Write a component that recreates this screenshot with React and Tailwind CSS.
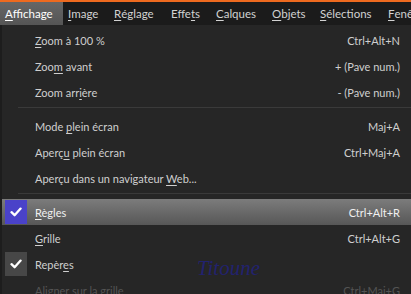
import React from "react";

const U = ({ children }) => <span className="underline underline-offset-2 decoration-1">{children}</span>;

const Check = () => (
  <svg width="12" height="10" viewBox="0 0 12 10" fill="none">
    <path d="M1.5 5.2 L4.6 8.2 L10.6 1.6" stroke="white" strokeWidth="2.3" strokeLinecap="round" strokeLinejoin="round" />
  </svg>
);

const topItems = [
  { w: "w-[63px]", label: <><U>A</U>ffichage</>, active: true },
  { w: "w-[46px]", label: <><U>I</U>mage</> },
  { w: "w-[57px]", label: <><U>R</U>églage</> },
  { w: "w-[45px]", label: <>Effe<U>t</U>s</> },
  { w: "w-[56px]", label: <><U>C</U>alques</> },
  { w: "w-[48px]", label: <><U>O</U>bjets</> },
  { w: "w-[68px]", label: <><U>S</U>élections</> },
  { w: "w-[60px]", label: <><U>F</U>enêtre</> },
];

const Row = ({ label, shortcut, check, highlight, dim }) => (
  <div className={`relative flex h-[26px] items-center ${highlight ? "bg-gradient-to-b from-[#7c7c7c] to-[#575757]" : ""}`}>
    {check === "blue" && (
      <div className="absolute left-[3px] top-[1px] bottom-[1px] w-[22px] bg-[#4a42c9] flex items-center justify-center"><Check /></div>
    )}
    {check === "gray" && (
      <div className="absolute left-[3px] top-[1px] bottom-[1px] w-[22px] bg-[#474747] flex items-center justify-center"><Check /></div>
    )}
    <div className={`pl-[33px] flex-1 ${dim ? "text-[#545454]" : highlight ? "text-[#f0f0f0]" : "text-[#cfcfcf]"}`}>{label}</div>
    <div className={`pr-[11px] ${dim ? "text-[#545454]" : highlight ? "text-[#f0f0f0]" : "text-[#cfcfcf]"}`}>{shortcut}</div>
  </div>
);

const Sep = () => (
  <div className="h-[8px] flex items-start pl-[16px] pt-[2px]">
    <div className="h-px w-full bg-[#3a3a3a]" />
  </div>
);

export default function App() {
  return (
    <div className="w-[411px] h-[294px] overflow-hidden bg-[#262626] text-[11px] leading-none" style={{ fontFamily: 'Lato, "Noto Sans", sans-serif' }}>
      <div className="h-[2px] bg-[#ee6a1f]" />
      <div className="h-[23px] flex bg-[#1b1b1b] text-[#d2d2d2] text-[11.5px] whitespace-nowrap">
        {topItems.map((it, i) => (
          <div key={i} className={`${it.w} shrink-0 flex items-center pl-[5px] ${it.active ? "bg-gradient-to-b from-[#666666] to-[#555555] text-white" : ""}`}>
            {it.label}
          </div>
        ))}
      </div>
      <div className="relative border-l-2 border-[#1d1d1d] pt-[2px] whitespace-nowrap">
        <Row label={<><U>Z</U>oom à 100 %</>} shortcut="Ctrl+Alt+N" />
        <Row label={<>Zoo<U>m</U> avant</>} shortcut="+ (Pave num.)" />
        <Row label={<>Zoom arr<U>i</U>ère</>} shortcut="- (Pave num.)" />
        <Sep />
        <Row label={<>Mode <U>p</U>lein écran</>} shortcut="Maj+A" />
        <Row label={<>Aperç<U>u</U> plein écran</>} shortcut="Ctrl+Maj+A" />
        <Row label={<>Aperçu dans un navigateur <U>W</U>eb...</>} shortcut="" />
        <Sep />
        <Row label={<><U>R</U>ègles</>} shortcut="Ctrl+Alt+R" check="blue" highlight />
        <Row label={<><U>G</U>rille</>} shortcut="Ctrl+Alt+G" />
        <Row label={<>Repèr<U>e</U>s</>} shortcut="" check="gray" />
        <Row label={<>Aligner sur la grille</>} shortcut="Ctrl+Maj+G" dim />
        <div className="absolute left-[195px] top-[233px] text-[#22226e] text-[21px] italic" style={{ fontFamily: '"Liberation Serif", serif' }}>Titoune</div>
      </div>
    </div>
  );
}
